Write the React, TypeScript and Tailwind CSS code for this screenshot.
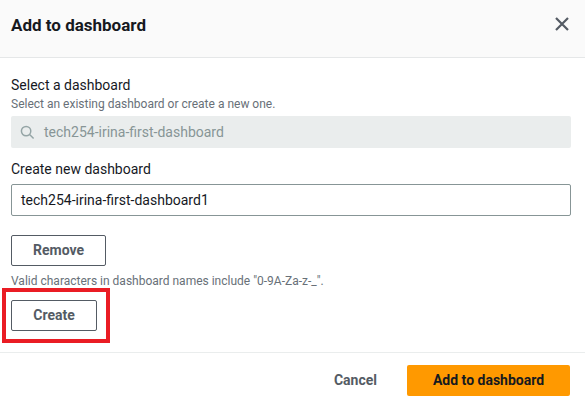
import React from "react";

export default function App() {
  return (
    <div className="w-[585px] h-[404px] bg-white flex flex-col text-[#16191f]" style={{ fontFamily: 'Roboto, "Open Sans", sans-serif' }}>
      <div className="h-[58px] shrink-0 bg-[#fafafa] border-b border-[#e5e7e8] flex items-center justify-between pl-[11px] pr-[16px]">
        <div className="text-[17px] font-bold leading-none -mt-[7px]">Add to dashboard</div>
        <svg width="14" height="14" viewBox="0 0 14 14" className="-mt-[9px]">
          <path d="M1 1L13 13M13 1L1 13" stroke="#545b64" strokeWidth="2.2" strokeLinecap="butt" />
        </svg>
      </div>
      <div className="flex flex-col px-[11px] pt-[18px] flex-1">
        <div className="text-[14px] leading-[18px]">Select a dashboard</div>
        <div className="text-[12px] leading-[16px] text-[#687078] mt-[2px]">Select an existing dashboard or create a new one.</div>
        <div className="mt-[4px] h-[32px] w-[560px] rounded-[2px] bg-[#eaeded] flex items-center pl-[9px] gap-[9px] text-[14px] text-[#879596]">
          <svg width="15" height="15" viewBox="0 0 16 16" fill="none">
            <circle cx="6.5" cy="6.5" r="5" stroke="#95a5a6" strokeWidth="1.6" />
            <path d="M10.2 10.2L14.5 14.5" stroke="#95a5a6" strokeWidth="1.6" />
          </svg>
          <span>tech254-irina-first-dashboard</span>
        </div>
        <div className="text-[14px] leading-[18px] mt-[12px]">Create new dashboard</div>
        <div className="mt-[6px] h-[32px] w-[560px] rounded-[2px] border border-[#879596] flex items-center pl-[9px] text-[14px]">
          tech254-irina-first-dashboard1
        </div>
        <div className="mt-[19px] h-[31px] w-[95px] rounded-[2px] border border-[#545b64] flex items-center justify-center text-[14px] font-bold text-[#545b64]">
          Remove
        </div>
        <div className="text-[12px] leading-[16px] text-[#687078] mt-[7px]">Valid characters in dashboard names include "0-9A-Za-z-_".</div>
        <div className="-mt-[1px] -ml-[9px] w-[108px] h-[55px] border-[4px] border-[#ea1c24] flex items-center pl-[5px]">
          <div className="h-[31px] w-[86px] rounded-[2px] border border-[#545b64] flex items-center justify-center text-[14px] font-bold text-[#545b64]">
            Create
          </div>
        </div>
      </div>
      <div className="h-[52px] shrink-0 border-t border-[#eaeded] flex items-start justify-end pr-[15px] pt-[12px] gap-[30px]">
        <div className="h-[31px] flex items-center text-[14px] font-bold text-[#545b64]">Cancel</div>
        <div className="h-[31px] w-[163px] rounded-[2px] bg-[#ff9900] flex items-center justify-center text-[14px] font-bold text-[#16191f]">
          Add to dashboard
        </div>
      </div>
    </div>
  );
}
